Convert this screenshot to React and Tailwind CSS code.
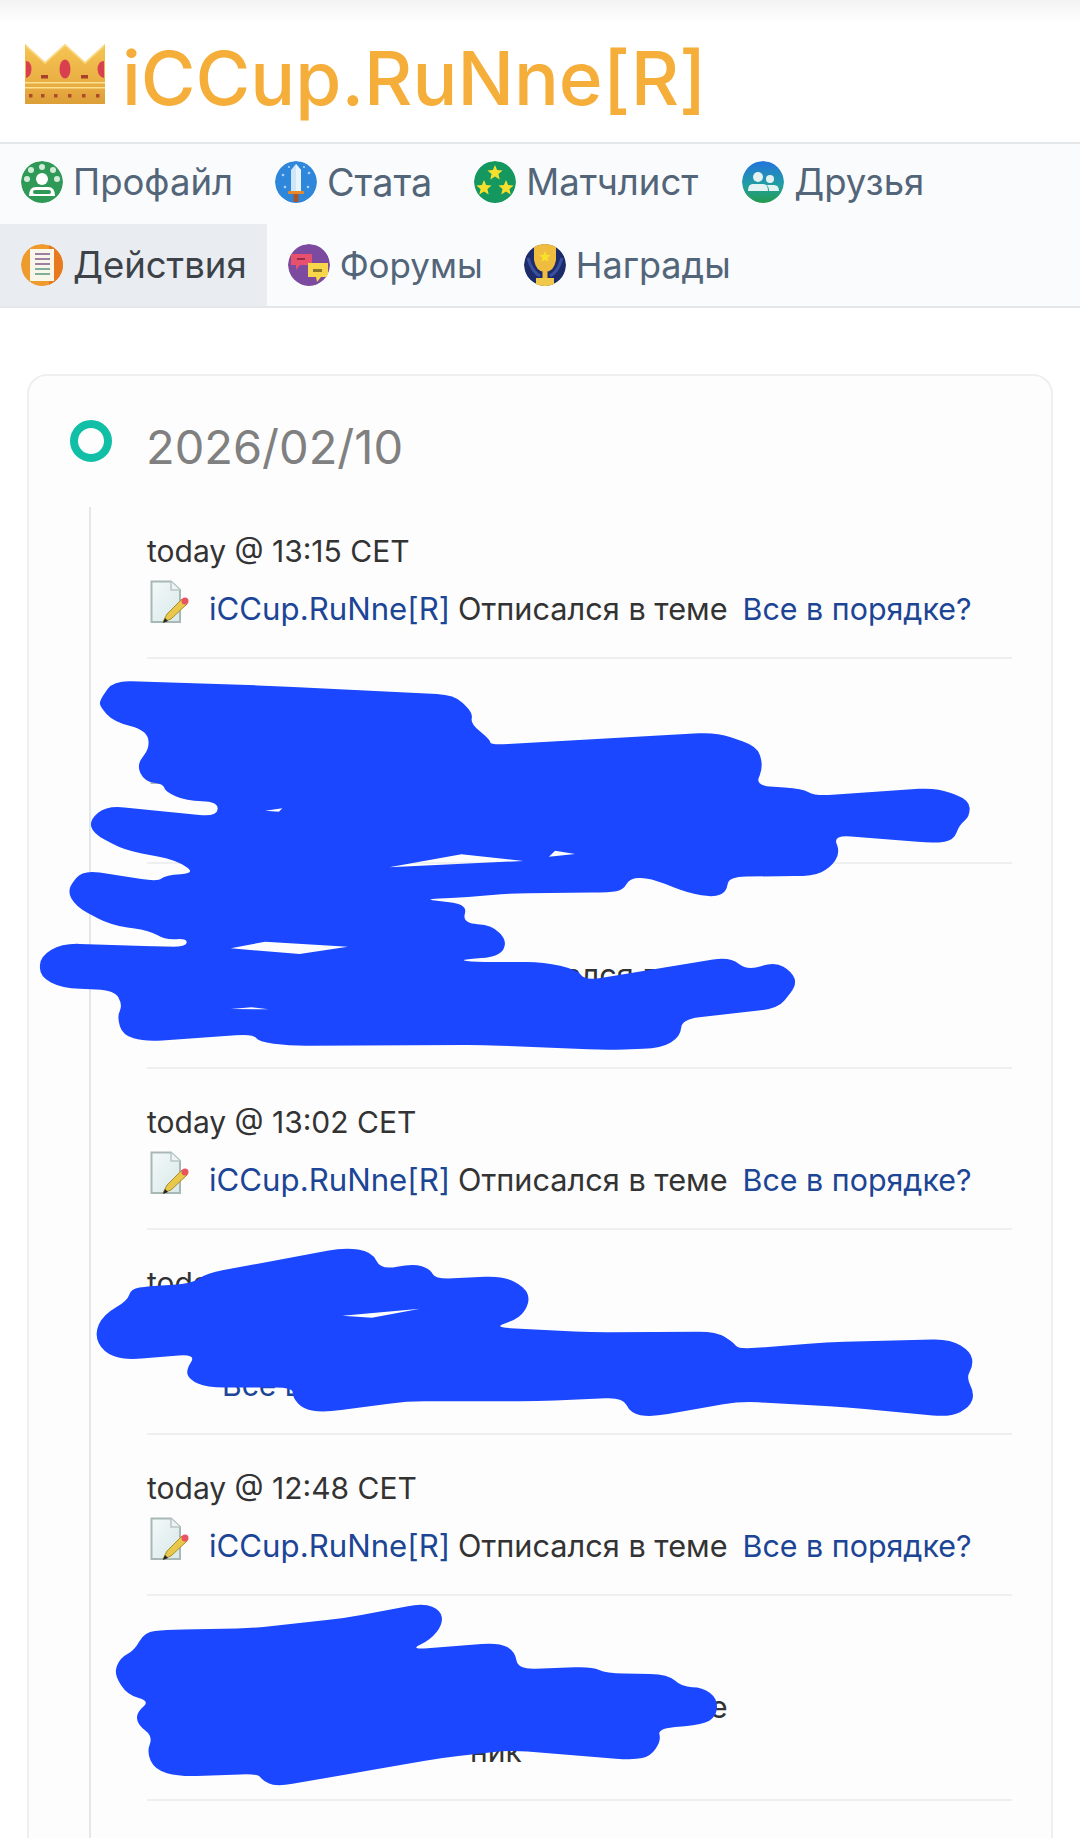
const smooth = (pts) => {
  const n = pts.length;
  const toward = (a, b, dist) => {
    const dx = b[0] - a[0], dy = b[1] - a[1];
    const len = Math.hypot(dx, dy) || 1;
    const t = Math.min(0.5, dist / len);
    return [a[0] + dx * t, a[1] + dy * t];
  };
  let d = "";
  pts.forEach((p, i) => {
    const prev = pts[(i - 1 + n) % n];
    const next = pts[(i + 1) % n];
    const a = toward(p, prev, 26);
    const b = toward(p, next, 26);
    d += `${i === 0 ? "M" : "L"}${a[0]} ${a[1]}Q${p[0]} ${p[1]} ${b[0]} ${b[1]}`;
  });
  return d + "Z";
};
const poly = (pts) => "M" + pts.map((p) => p.join(" ")).join("L") + "Z";

const massA = [[145,120],[165,62],[400,78],[660,105],[687,160],[683,190],[712,240],[712,255],[1040,217],[1100,260],[1108,320],[1097,378],[1165,385],[1183,408],[1360,383],[1408,420],[1408,470],[1393,495],[1385,540],[1358,550],[1210,525],[1220,580],[1205,625],[1180,648],[1058,650],[1055,695],[1037,712],[1000,700],[945,655],[915,653],[905,690],[885,697],[740,700],[680,712],[612,718],[678,732],[672,790],[715,795],[737,845],[725,890],[665,900],[690,906],[790,906],[838,930],[850,962],[1060,890],[1085,932],[1125,905],[1150,935],[1157,975],[1130,1045],[990,1078],[988,1130],[960,1165],[880,1170],[700,1155],[420,1158],[375,1145],[368,1122],[210,1145],[178,1125],[170,1070],[178,1035],[166,990],[90,985],[58,950],[58,890],[90,850],[270,862],[272,835],[240,840],[218,812],[160,795],[110,740],[97,690],[120,630],[230,665],[240,645],[285,640],[255,600],[180,570],[135,520],[130,480],[155,437],[315,470],[317,425],[270,423],[240,395],[237,372],[210,365],[198,315],[218,262],[212,210],[165,185],[145,140]];
const holesA = [[[565,622],[670,583],[760,603]],[[797,590],[806,572],[835,582]],[[335,865],[385,845],[505,860],[435,882]],[[385,452],[410,445],[405,455]],[[335,1047],[365,1042],[390,1048]]];
const massB = [[137,290],[150,240],[185,205],[190,175],[215,168],[278,162],[300,135],[500,70],[540,80],[553,127],[600,110],[625,125],[632,150],[730,142],[762,170],[770,205],[755,250],[715,272],[860,285],[1040,283],[1065,310],[1072,328],[1200,310],[1380,302],[1410,335],[1413,370],[1403,400],[1415,440],[1408,475],[1380,500],[1230,475],[1075,460],[945,500],[915,490],[905,450],[780,460],[590,460],[470,488],[440,480],[425,450],[425,425],[300,425],[275,405],[270,380],[285,340],[180,355],[150,335]];
const holeB = [[497,243],[610,225],[540,248]];
const massC = [[165,1150],[175,1110],[195,1092],[210,1045],[240,1040],[370,1035],[500,1010],[615,972],[640,990],[643,1025],[625,1065],[595,1090],[725,1072],[748,1095],[752,1140],[860,1133],[880,1150],[970,1152],[990,1185],[1020,1185],[1042,1215],[1040,1260],[1020,1280],[955,1290],[960,1320],[945,1360],[920,1370],[740,1345],[640,1365],[540,1395],[400,1438],[380,1420],[375,1405],[260,1412],[225,1395],[213,1350],[222,1310],[200,1280],[198,1250],[218,1220],[185,1205]];

function Scribbles() {
  return (
    <svg className="absolute left-0 top-0 pointer-events-none" width="1080" height="1838" viewBox="0 0 1080 1838">
      <g fill="#1a47ff" fillRule="evenodd">
        <path transform="translate(0 660) scale(0.6887 0.3333)" d={smooth(massA) + holesA.map(poly).join("")} />
        <path transform="translate(0 1220) scale(0.6887 0.3942)" d={smooth(massB) + poly(holeB)} />
        <path transform="translate(0 1220) scale(0.6887 0.3942)" d={smooth(massC)} />
      </g>
    </svg>
  );
}

function Crown() {
  return (
    <svg width="80" height="60" viewBox="0 0 80 60" className="shrink-0">
      <defs>
        <linearGradient id="cg" x1="0" y1="0" x2="0" y2="1">
          <stop offset="0" stopColor="#f6c552" />
          <stop offset="0.6" stopColor="#eab045" />
          <stop offset="1" stopColor="#dd9f38" />
        </linearGradient>
      </defs>
      <path d="M0 0 L20 18 L40 0 L60 18 L80 0 V60 H0 Z" fill="url(#cg)" />
      <path d="M1 2 L20 19 L40 1 L60 19 L79 2" fill="none" stroke="#f9dc86" strokeWidth="1.5" />
      <ellipse cx="40" cy="25" rx="5.5" ry="9.5" fill="#d9404f" />
      <path d="M1 17 Q6 17 6.5 25 Q6 33 1 34 Z" fill="#d9404f" />
      <path d="M79 17 Q73 17 72.5 25 Q73 33 79 34 Z" fill="#d9404f" />
      <g fill="#a8402b">
        <rect x="16" y="31" width="7" height="3.5" />
        <rect x="56" y="31" width="7" height="3.5" />
      </g>
      <rect x="0" y="38" width="80" height="1.5" fill="#fbe08e" />
      <rect x="0" y="43" width="80" height="1.5" fill="#fbe08e" />
      <g fill="#b0482c">
        <rect x="4" y="50" width="3.5" height="3.5" />
        <rect x="16" y="50" width="3.5" height="3.5" />
        <rect x="29" y="50" width="3.5" height="3.5" />
        <rect x="43" y="50" width="3.5" height="3.5" />
        <rect x="57" y="50" width="3.5" height="3.5" />
        <rect x="71" y="50" width="3.5" height="3.5" />
      </g>
    </svg>
  );
}

const Star = ({ x, y, r = 6 }) => {
  const p = [];
  for (let i = 0; i < 10; i++) {
    const a = -Math.PI / 2 + (i * Math.PI) / 5;
    const q = i % 2 ? r * 0.45 : r;
    p.push(`${x + q * Math.cos(a)},${y + q * Math.sin(a)}`);
  }
  return <polygon points={p.join(" ")} fill="#f7e02c" />;
};

function NavIcon({ kind }) {
  const inner = {
    profile: (
      <>
        <circle cx="21" cy="21" r="21" fill="#2f9a57" />
        <g fill="#d3ecd9">
          <circle cx="21" cy="6" r="3" />
          <circle cx="10" cy="9" r="3" />
          <circle cx="32" cy="9" r="3" />
          <circle cx="6" cy="18" r="3" />
          <circle cx="36" cy="18" r="3" />
        </g>
        <circle cx="21" cy="18" r="6" fill="#fff" />
        <path d="M8 35 Q8 26 15 26 H27 Q34 26 34 35 Z" fill="#fff" />
        <rect x="12" y="29" width="18" height="4" rx="2" fill="#2f9a57" />
      </>
    ),
    stat: (
      <>
        <circle cx="21" cy="21" r="21" fill="#2f87dc" />
        <g fill="#a9d3f6">
          <circle cx="8" cy="14" r="1.3" />
          <circle cx="34" cy="12" r="1.3" />
          <circle cx="10" cy="26" r="1.3" />
          <circle cx="33" cy="26" r="1.3" />
          <circle cx="14" cy="6" r="1.1" />
          <circle cx="29" cy="6" r="1.1" />
        </g>
        <path d="M21 3 L26 9 V30 H16 V9 Z" fill="#cfe6f8" />
        <path d="M21 3 L26 9 V30 H21 Z" fill="#e9f4fc" />
        <rect x="13" y="30" width="16" height="3" rx="1" fill="#e58a2c" />
        <rect x="18.5" y="33" width="5" height="8" fill="#a9562a" />
      </>
    ),
    match: (
      <>
        <circle cx="21" cy="21" r="21" fill="#14985f" />
        <Star x={21} y={12} r={8} />
        <Star x={10} y={27} r={8} />
        <Star x={32} y={27} r={8} />
      </>
    ),
    friends: (
      <>
        <defs>
          <linearGradient id="fg" x1="0" y1="0" x2="0" y2="1">
            <stop offset="0" stopColor="#2474dd" />
            <stop offset="0.6" stopColor="#22a0a0" />
            <stop offset="1" stopColor="#249a4b" />
          </linearGradient>
        </defs>
        <circle cx="21" cy="21" r="21" fill="url(#fg)" />
        <circle cx="16" cy="16" r="5" fill="#e4f3f1" />
        <circle cx="28" cy="18" r="4" fill="#e4f3f1" />
        <path d="M6 30 Q6 22 12 23 H20 Q26 22 26 30 Z" fill="#e4f3f1" />
        <path d="M27 30 Q27 25 24 24 H32 Q37 24 37 30 Z" fill="#e4f3f1" />
      </>
    ),
    actions: (
      <>
        <circle cx="21" cy="21" r="21" fill="#ef9a2d" />
        <path d="M28 1 A21 21 0 0 1 28 41 Z" fill="#e8791f" />
        <rect x="9" y="5" width="24" height="32" fill="#f7f6e8" />
        <g fill="#9d7fa3">
          <rect x="14" y="9" width="15" height="2" />
          <rect x="14" y="14" width="15" height="2" />
          <rect x="14" y="19" width="15" height="2" />
        </g>
        <g fill="#7fae9d">
          <rect x="14" y="24" width="15" height="2" />
          <rect x="14" y="29" width="15" height="2" />
        </g>
      </>
    ),
    forum: (
      <>
        <circle cx="21" cy="21" r="21" fill="#7c4a9e" />
        <path d="M3 10 H24 V21 H12 L8 26 V21 H3 Z" fill="#e8516e" />
        <path d="M20 19 H40 V33 H33 L29 38 L28 33 H20 Z" fill="#f7d64a" />
        <rect x="25" y="25" width="9" height="3" fill="#8c7a2c" />
        <rect x="9" y="14" width="8" height="2" fill="#9c2b4b" />
      </>
    ),
    awards: (
      <>
        <circle cx="21" cy="21" r="21" fill="#1c2c6b" />
        <path d="M10 0 H32 V16 Q30 28 21 28 Q12 28 10 16 Z" fill="#f0bc3f" />
        <Star x={21} y={13} r={6} />
        <rect x="18.5" y="27" width="5" height="8" fill="#f0bc3f" />
        <rect x="12" y="34" width="18" height="8" fill="#f0c84a" />
        <path d="M4 14 Q8 28 16 32" stroke="#3a4f9e" strokeWidth="3" fill="none" />
        <path d="M38 14 Q34 28 26 32" stroke="#3a4f9e" strokeWidth="3" fill="none" />
      </>
    ),
  }[kind];
  return (
    <svg width="42" height="42" viewBox="0 0 42 42" className="shrink-0">
      <clipPath id={`clip-${kind}`}>
        <circle cx="21" cy="21" r="21" />
      </clipPath>
      <g clipPath={`url(#clip-${kind})`}>{inner}</g>
    </svg>
  );
}

function NavItem({ kind, label, active, size = "text-[36.5px]", pr = "pr-[21px]" }) {
  return (
    <div className={`flex h-full items-center gap-[10px] pl-[21px] ${pr} ${size} ${active ? "bg-[#e9edf1] text-[#3c4248]" : "text-[#526579]"}`}>
      <NavIcon kind={kind} />
      <span>{label}</span>
    </div>
  );
}

function FileIcon() {
  return (
    <svg width="40" height="44" viewBox="0 0 40 44" className="shrink-0 -mt-[7px] ml-[3px]">
      <defs>
        <linearGradient id="pg" x1="0" y1="0" x2="1" y2="1">
          <stop offset="0" stopColor="#f4f9f9" />
          <stop offset="1" stopColor="#d8e8e8" />
        </linearGradient>
      </defs>
      <path d="M1.5 1.5 H21 L30 10 V42 H1.5 Z" fill="url(#pg)" stroke="#a8b8b6" strokeWidth="2" />
      <path d="M21 1.5 V10 H30" fill="#eef4f4" stroke="#b8c6c4" strokeWidth="1.5" />
      <path d="M13 42 L17 34 L32 19 L37 24 L21 39 Z" fill="#e8c74a" stroke="#a88f2a" strokeWidth="1" />
      <circle cx="35" cy="21" r="3.5" fill="#e8555f" />
      <path d="M13 43 L15 38 L18 41 Z" fill="#222" />
    </svg>
  );
}

function Item({ time = "today", link = "Все в порядке?", second, secondClass = "", offset = "ml-[19px]", pt = "pt-[31px]" }) {
  return (
    <div className={`border-b-2 border-[#eeeff1] ${pt} pb-[26px] text-[#333333] text-[30px]`}>
      <div className="mb-[14px] h-[44px] leading-[44px]">{time}</div>
      <div className="flex h-[44px] items-start leading-[44px] whitespace-nowrap">
        <FileIcon />
        <a className={`text-[31.2px] text-[#1c4595] ${offset}`}>iCCup.RuNne[R]</a>
        <span className="ml-[8px] text-[30.7px]">Отписался в теме</span>
        {link && <a className="ml-[15px] text-[30.4px] text-[#1c4595]">{link}</a>}
      </div>
      {second !== undefined && <div className={`h-[44px] leading-[44px] whitespace-nowrap ${secondClass}`}>{second}</div>}
    </div>
  );
}

export default function App() {
  return (
    <div className="relative h-[1838px] w-[1080px] overflow-hidden bg-white font-['Inter','Noto_Sans',sans-serif]">
      <header className="flex h-[142px] items-start bg-gradient-to-b from-[#f3f3f3] via-white via-[16%] to-white pl-[25px]">
        <div className="mt-[44px]"><Crown /></div>
        <h1 className="ml-[17px] mt-[23px] text-[74.7px] leading-[110px] font-medium text-[#f5ae3a]">iCCup.RuNne[R]</h1>
      </header>
      <nav className="border-y-2 border-[#e4e7ea] bg-[#fafbfc]">
        <div className="flex h-[80px] pb-[4px]">
          <NavItem kind="profile" label="Профайл" />
          <NavItem kind="stat" label="Стата" size="text-[37.8px]" />
          <NavItem kind="match" label="Матчлист" pr="pr-[23px]" />
          <NavItem kind="friends" label="Друзья" />
        </div>
        <div className="flex h-[82px]">
          <NavItem kind="actions" label="Действия" active pr="pr-[20px]" />
          <NavItem kind="forum" label="Форумы" size="text-[35px]" pr="pr-[20px]" />
          <NavItem kind="awards" label="Награды" size="text-[36px]" />
        </div>
      </nav>
      <main className="mx-[27px] mt-[66px] h-[1600px] rounded-[20px] border-2 border-[#eeeff1] bg-[#fdfdfe]">
        <div className="flex items-start pl-[41px] pt-[44px]">
          <div className="h-[42px] w-[42px] rounded-full border-[8px] border-[#10bfa5]" />
          <div className="ml-[34px] -mt-[1px] text-[47px] leading-[56px] text-[#808080]">2026/02/10</div>
        </div>
        <section className="ml-[60px] mr-[39px] mt-[32px] h-[1400px] border-l-2 border-[#e4e7ea] pl-[56px]">
          <Item time="today @ 13:15 CET" pt="pt-[22px]" />
          <Item link="" second="" />
          <Item link="" second="" offset="ml-[33px]" />
          <Item time="today @ 13:02 CET" />
          <Item link="" second="Все в порядке?" secondClass="pl-[75px] text-[#1c4595]" />
          <Item time="today @ 12:48 CET" />
          <Item link="" second="ник" secondClass="pl-[323px]" />
        </section>
      </main>
      <Scribbles />
    </div>
  );
}
